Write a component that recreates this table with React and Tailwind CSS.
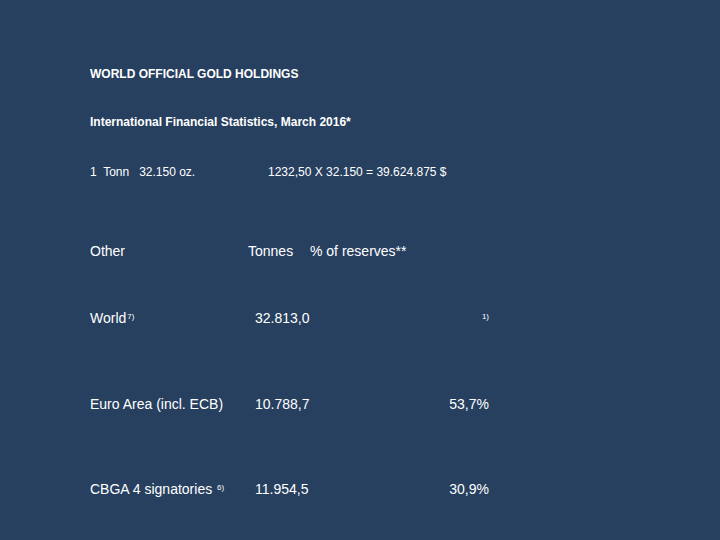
import React from "react";

const rows = [
  { label: "World", sup: "7)", tonnes: "32.813,0", pct: null, pctSup: "1)", mt: "mt-[47px]" },
  { label: "Euro Area (incl. ECB)", sup: null, tonnes: "10.788,7", pct: "53,7%", mt: "mt-[66px]" },
  { label: "CBGA 4 signatories ", sup: "6)", tonnes: "11.954,5", pct: "30,9%", mt: "mt-[65px]" },
];

const App = () => {
  return (
    <div
      className="w-[720px] h-[540px] bg-[#27405f] text-white pl-[90px] pt-[64px] overflow-hidden"
      style={{ fontFamily: '"Liberation Sans", Arial, sans-serif' }}
    >
      <div className="h-[20px] flex items-center text-[12px] font-bold">
        WORLD OFFICIAL GOLD HOLDINGS
      </div>
      <div className="h-[20px] mt-[28px] flex items-center text-[12px] font-bold">
        International Financial Statistics, March 2016*
      </div>
      <div className="h-[20px] mt-[30px] flex items-center text-[12px]">
        <span className="w-[178px] whitespace-pre">1  Tonn   32.150 oz.</span>
        <span>1232,50 X 32.150 = 39.624.875 $</span>
      </div>

      <div className="h-[20px] mt-[59px] flex items-center text-[14px]">
        <span className="w-[158px]">Other</span>
        <span className="w-[62px]">Tonnes</span>
        <span>% of reserves**</span>
      </div>

      {rows.map((r) => (
        <div key={r.label} className={`h-[20px] ${r.mt} flex items-center text-[14px]`}>
          <span className="w-[165px] whitespace-pre">
            {r.label}
            {r.sup && <sup className="text-[8px] ml-[1px]">{r.sup}</sup>}
          </span>
          <span className="w-[100px]">{r.tonnes}</span>
          <span className="w-[134px] text-right">
            {r.pct}
            {r.pctSup && <sup className="text-[8px]">{r.pctSup}</sup>}
          </span>
        </div>
      ))}
    </div>
  );
};

export default App;
